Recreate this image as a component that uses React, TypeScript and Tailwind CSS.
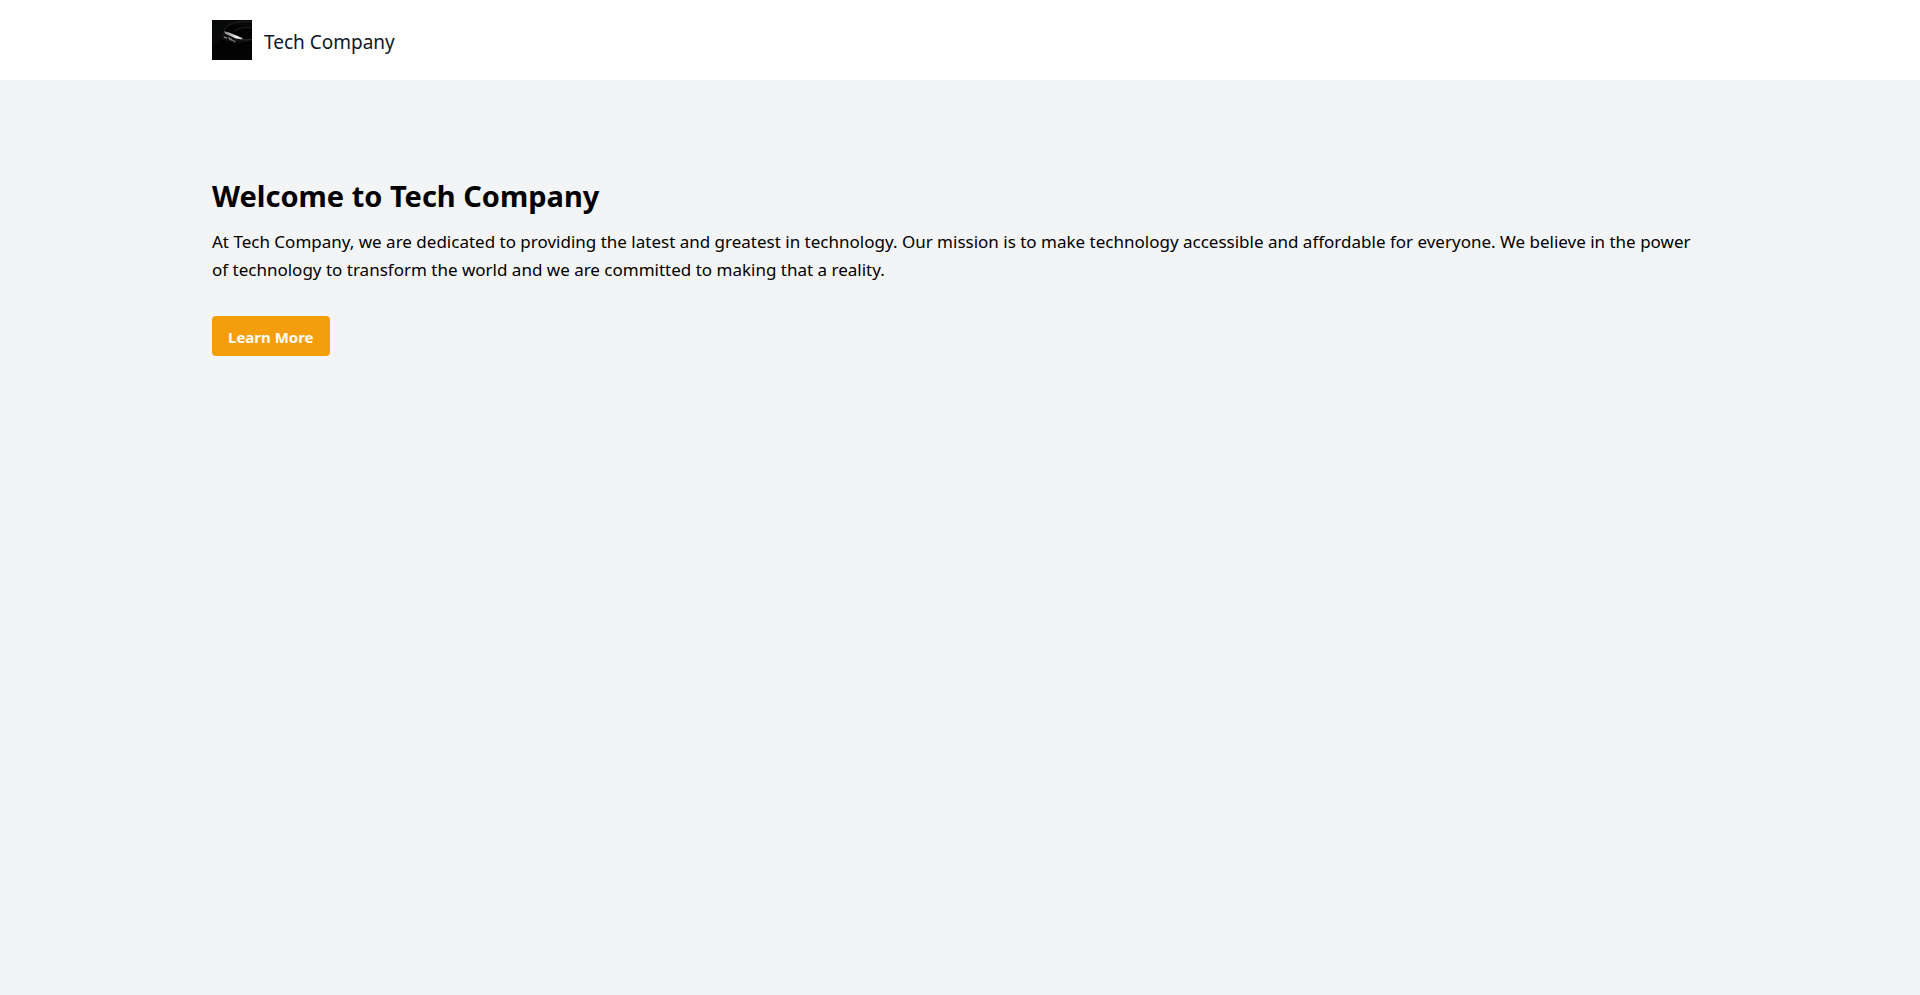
function Logo() {
  return (
    <svg className="size-10" viewBox="0 0 40 40" fill="none" role="img" aria-label="Tech Company logo">
      <defs>
        <linearGradient id="band" x1="12" y1="11" x2="31" y2="19" gradientUnits="userSpaceOnUse">
          <stop offset="0" stopColor="#8a8a8a" />
          <stop offset="0.35" stopColor="#b4b4b4" />
          <stop offset="0.7" stopColor="#f2f2f2" />
          <stop offset="1" stopColor="#a0a0a0" />
        </linearGradient>
      </defs>
      <rect width="40" height="40" fill="#030303" />
      <path d="M0 0H40V8Q26 2 12 8L8 20L0 26Z" fill="#080909" />
      <path d="M12 11Q13 5 22 3Q31 1 40 2" stroke="#1c1e1e" strokeWidth="1.2" />
      <path d="M22 11Q30 6 40 8" stroke="#202222" strokeWidth="1" />
      <path d="M10 12L9 18Q18 25 40 21V19Q33 20 28 18Z" fill="#101111" />
      <path d="M40 19Q34 21 30 19" stroke="#303232" strokeWidth="1" />
      <path d="M12 11.2L17 12.6L30.5 18L30 19.4L24 18.4L13 13.6Z" fill="url(#band)" />
      <path d="M12 17.2L15 18.2M16.5 17.2L18.5 20M19 18.6L20.5 21M21.5 20.5L23 22" stroke="#858585" strokeWidth="1.4" />
    </svg>
  );
}

export default function App() {
  return (
    <div className="min-h-screen bg-gray-100 font-['Noto_Sans',sans-serif] text-black">
      <header className="bg-white">
        <nav className="mx-auto flex h-20 max-w-[1536px] items-center px-5">
          <a href="#" className="flex items-center gap-3 text-gray-900">
            <Logo />
            <span className="pt-1 text-[19px] leading-7">Tech Company</span>
          </a>
        </nav>
      </header>
      <main className="mx-auto max-w-[1536px] px-5 py-24">
        <h1 className="mb-3.5 pt-0.5 text-[29px] leading-9 font-bold">Welcome to Tech Company</h1>
        <p className="mb-8 text-[17px] leading-7">
          At Tech Company, we are dedicated to providing the latest and greatest in technology. Our mission is to make
          technology accessible and affordable for everyone. We believe in the power of technology to transform the
          world and we are committed to making that a reality.
        </p>
        <button type="button" className="rounded bg-[#f59e0b] px-4 pt-[9px] pb-[7px] text-[15px] leading-6 font-bold text-white">
          Learn More
        </button>
      </main>
    </div>
  );
}
